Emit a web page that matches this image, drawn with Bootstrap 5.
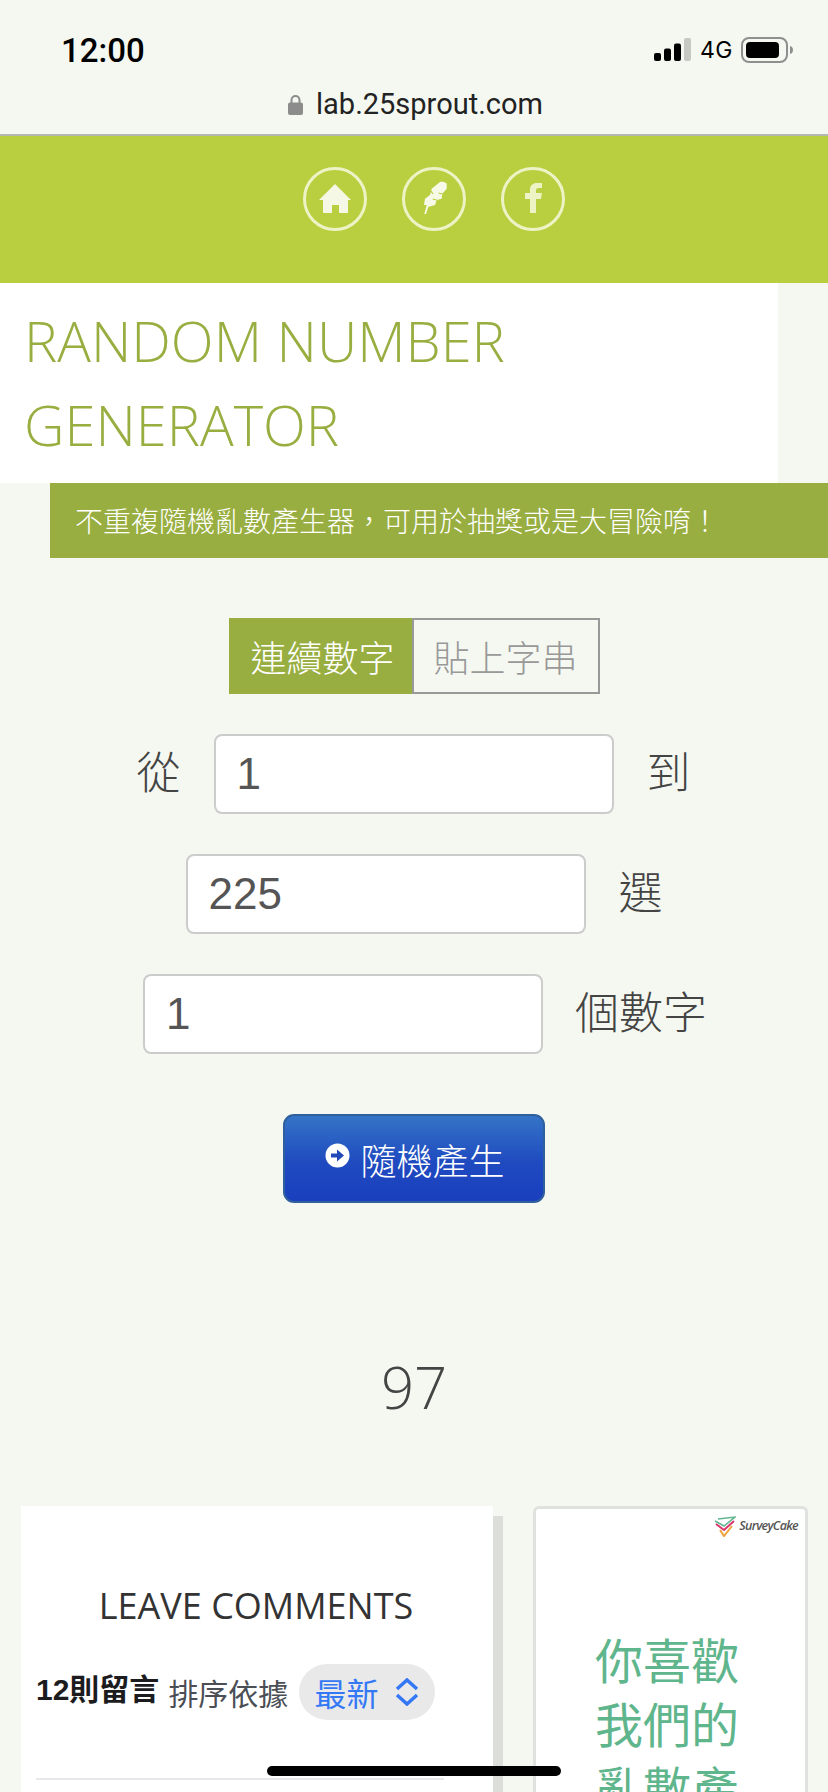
<!DOCTYPE html>
<html lang="zh-Hant">
<head>
    <meta charset="UTF-8">
    <title>Random Number Generator</title>
    <link href="https://cdn.jsdelivr.net/npm/bootstrap@5.3.0/dist/css/bootstrap.min.css" rel="stylesheet">
    <style>
        html, body { height: 1792px; overflow: hidden; }
        body { background: #f5f8f1; font-family: "Noto Sans CJK TC Light", "Noto Sans CJK TC", sans-serif; font-weight: 300; color: #444; position: relative; }
        .ios-bar { height: 136px; border-bottom: 2px solid #b5b7b2; font-family: Roboto, sans-serif; color: #000; }
        .ios-status { height: 88px; padding: 12px 34px 0 61px; }
        .ios-time { font-size: 33px; font-weight: 500; line-height: 1; }
        .ios-net { font-family: Inter, sans-serif; font-size: 23px; font-weight: 400; letter-spacing: .5px; }
        .ios-url { margin-top: 2px; padding-left: 3px; font-size: 29px; font-weight: 400; line-height: 1; color: #222; gap: 13px; }
        .top-menu { height: 147px; background: #b9cf40; padding: 31px 0 0 40px; gap: 35px; }
        .top-menu svg { display: block; }
        .title-box { width: 778px; height: 200px; background: #fff; padding: 15px 0 0 24px; }
        .title-box h1 { font-family: "Open Sans", sans-serif; font-weight: 300; font-size: 56px; line-height: 84px; color: #98ae40; margin: 0; }
        .sub-bar { margin-left: 50px; height: 75px; background: #98ae40; color: #fff; padding-left: 25px; font-size: 28px; line-height: 75px; }
        .mode-tabs { margin-top: 60px; }
        .mode-tabs .btn-group > .btn { height: 76px; font-size: 36px; line-height: 1; font-weight: 300; border-radius: 0; padding: 0; margin: 0; }
        .mode-tabs .btn-group > .tab-on { width: 184px; background: #98ae40; border: 0; color: #fff; padding-left: 4px; }
        .mode-tabs .btn-group > .tab-off { width: 188px; background: transparent; border: 2px solid #999; color: #999; }
        .num-rows { margin-top: 40px; gap: 40px; font-size: 44px; }
        .num-row { gap: 33px; line-height: 1; }
        .num-row span { margin-top: -8px; }
        .num-row.r1 { padding-right: 1px; }
        .num-row.r2 { padding-left: 20px; }
        .num-row.r3 { padding-left: 22px; gap: 32px; }
        .num-field { width: 400px; height: 80px; flex: none; border: 2px solid #ccc; border-radius: 8px; font-family: "Liberation Sans", sans-serif; font-size: 44px; color: #555; padding: 0 21px; }
        .go-btn { display: flex; align-items: center; justify-content: center; gap: 10px; width: 262px; height: 89px; margin: 60px auto 0; padding: 0 0 0 2px; font-size: 36px; font-weight: 400; color: #fff; border: 2px solid #2f5f9c; border-radius: 11px; background: linear-gradient(#3474c6, #1f4ac0 55%, #1a3fbe); }
        .go-btn:hover { color: #fff; }
        .go-btn svg { margin-top: -6px; }
        .result-num { margin-top: 149px; height: 70px; text-align: center; font-family: "Open Sans", sans-serif; font-weight: 300; font-size: 58px; line-height: 70px; color: #444; }
        .lower-wrap { margin-top: 84px; padding: 0 21px; gap: 30px; align-items: flex-start; }
        .comments-box { width: 482px; height: 400px; flex: none; background: linear-gradient(#fff, #fff) no-repeat 0 0 / 472px 100%, linear-gradient(#dcdfd9, #dcdfd9) no-repeat 0 10px; padding: 0 27px 0 15px; }
        .comments-box h2 { font-family: "Open Sans", sans-serif; font-weight: 400; font-size: 36px; line-height: 1; color: #333; text-align: center; margin: 82px 0 0 0; }
        .sort-row { margin-top: 40px; height: 56px; gap: 9px; }
        .sort-count { font-family: "Liberation Sans", "Noto Sans CJK TC", sans-serif; font-weight: 700; font-size: 30px; color: #1c1c1e; margin-top: -6px; }
        .sort-label { font-size: 30px; font-weight: 400; color: #4b4e55; font-family: "Noto Sans CJK TC", sans-serif; }
        .sort-pill { height: 56px; width: 136px; margin-left: 2px; border-radius: 28px; background: #e9e9e9; color: #3478f6; font-size: 32px; font-weight: 400; padding-left: 15px; gap: 17px; font-family: "Noto Sans CJK TC", sans-serif; }
        .sort-line { width: 408px; height: 2px; background: #e7e8ec; margin-top: 58px; }
        .survey-box { width: 275px; height: 400px; flex: none; background: #fff; border: 3px solid #e0e2e0; border-radius: 6px 6px 0 0; }
        .survey-logo { gap: 3px; padding: 7px 7px 0 0; font-family: "Open Sans", sans-serif; font-style: italic; font-weight: 600; font-size: 12.5px; letter-spacing: -.7px; color: #555; }
        .survey-text { margin-top: 89px; padding-right: 7px; text-align: center; font-size: 48px; line-height: 64px; font-weight: 400; color: #5fb58c; font-family: "Noto Sans CJK TC", sans-serif; }
        .home-bar { position: absolute; left: 267px; top: 1766px; width: 294px; height: 10px; border-radius: 5px; background: #000; }
    </style>
</head>
<body>
<div class="ios-bar">
    <div class="ios-status d-flex align-items-center justify-content-between">
        <span class="ios-time">12:00</span>
        <div class="d-flex align-items-center gap-2">
            <svg width="38" height="24" viewBox="0 0 38 24">
                <rect x="0" y="15" width="7" height="8" rx="2" fill="#000"/>
                <rect x="10" y="10.5" width="7" height="12.5" rx="2" fill="#000"/>
                <rect x="20" y="5.5" width="7" height="17.5" rx="2" fill="#000"/>
                <rect x="30" y="0" width="7" height="23" rx="2" fill="#c6c8c4"/>
            </svg>
            <span class="ios-net">4G</span>
            <svg width="53" height="26" viewBox="0 0 53 26">
                <rect x="1" y="1" width="45" height="24" rx="7" fill="none" stroke="#8f8f8f" stroke-width="2"/>
                <rect x="5" y="5" width="33" height="16" rx="4" fill="#000"/>
                <path d="M49 9c2 .6 3 2 3 4s-1 3.400-3 4z" fill="#8f8f8f"/>
            </svg>
        </div>
    </div>
    <div class="ios-url d-flex align-items-center justify-content-center">
        <svg width="15" height="21" viewBox="0 0 15 21">
            <path d="M3.500 9V6a4 4 0 0 1 8 0v3" fill="none" stroke="#8c8c8c" stroke-width="2"/>
            <rect x="0" y="8.500" width="15" height="12.500" rx="2" fill="#8c8c8c"/>
        </svg>
        <span>lab.25sprout.com</span>
    </div>
</div>

<nav class="top-menu d-flex justify-content-center">
    <a href="#">
        <svg width="64" height="64" viewBox="0 0 64 64">
            <circle cx="32" cy="32" r="30.500" fill="none" stroke="#eef3c6" stroke-width="3"/>
            <path d="M32 17 48 33h-3v13H36V38H29v8H20V33h-4z" fill="#f5f8e4"/>
        </svg>
    </a>
    <a href="#">
        <svg width="64" height="64" viewBox="0 0 64 64">
            <circle cx="32" cy="32" r="30.500" fill="none" stroke="#eef3c6" stroke-width="3"/>
            <path d="M44.700 16.700C43 15 40 14.500 38 15L29.700 21.700 28 28 23 31.700 22 38 24.700 38 22.300 47 24 47 26.300 40 33 38 34.700 33 39.700 31.700 40.300 26.700 44.700 21.700Z" fill="#f8fae8"/>
            <path d="M40.500 27l-4-1M34.700 33l-4-1M29 24l2 3" fill="none" stroke="#b9cf40" stroke-width="1.200"/>
        </svg>
    </a>
    <a href="#">
        <svg width="64" height="64" viewBox="0 0 64 64">
            <circle cx="32" cy="32" r="30.500" fill="none" stroke="#eef3c6" stroke-width="3"/>
            <path d="M29 46V32h-5v-6h5v-3c0-5 3-7 7-7h5v5h-3c-2 0-3 .8-3 2.500V26h6l-1 6h-5v14z" fill="#eef3c6"/>
        </svg>
    </a>
</nav>

<div class="title-box">
    <h1>RANDOM NUMBER GENERATOR</h1>
</div>
<div class="sub-bar">不重複隨機亂數產生器，可用於抽獎或是大冒險唷！</div>

<div class="mode-tabs d-flex justify-content-center">
    <div class="btn-group">
        <button class="btn tab-on" type="button">連續數字</button>
        <button class="btn tab-off" type="button">貼上字串</button>
    </div>
</div>

<div class="num-rows d-flex flex-column">
    <div class="num-row r1 d-flex align-items-center justify-content-center">
        <span>從</span>
        <input class="form-control num-field" type="text" value="1">
        <span>到</span>
    </div>
    <div class="num-row r2 d-flex align-items-center justify-content-center">
        <input class="form-control num-field" type="text" value="225">
        <span>選</span>
    </div>
    <div class="num-row r3 d-flex align-items-center justify-content-center">
        <input class="form-control num-field" type="text" value="1">
        <span>個數字</span>
    </div>
</div>

<button class="btn go-btn" type="button">
    <svg width="25" height="25" viewBox="0 0 25 25">
        <circle cx="12.500" cy="12.500" r="12" fill="#fff"/>
        <path d="M6 10.500h6V6.500l7 6-7 6v-4H6z" fill="#2149b8"/>
    </svg>
    <span>隨機產生</span>
</button>

<div class="result-num">97</div>

<div class="lower-wrap d-flex">
    <section class="comments-box">
        <h2>LEAVE COMMENTS</h2>
        <div class="sort-row d-flex align-items-center">
            <span class="sort-count">12則留言</span>
            <span class="sort-label">排序依據</span>
            <span class="sort-pill d-flex align-items-center">
                <span>最新</span>
                <svg width="24" height="28" viewBox="0 0 24 28">
                    <path d="M2 11 12 2l10 9M2 17l10 9 10-9" fill="none" stroke="#3478f6" stroke-width="3.500"/>
                </svg>
            </span>
        </div>
        <div class="sort-line"></div>
    </section>
    <aside class="survey-box">
        <div class="survey-logo d-flex align-items-center justify-content-end">
            <svg width="22" height="21" viewBox="0 0 22 21">
                <path d="M1 5 10 10 21 1 4 3" fill="none" stroke="#5fb58c" stroke-width="1.500"/>
                <path d="M2 8 10 14 20 5" fill="none" stroke="#d8366a" stroke-width="2"/>
                <path d="M6 14 10 20 18 10" fill="none" stroke="#f0a23c" stroke-width="2"/>
            </svg>
            <span>SurveyCake</span>
        </div>
        <div class="survey-text">你喜歡<br>我們的<br>亂數產</div>
    </aside>
</div>

<div class="home-bar"></div>
</body>
</html>
